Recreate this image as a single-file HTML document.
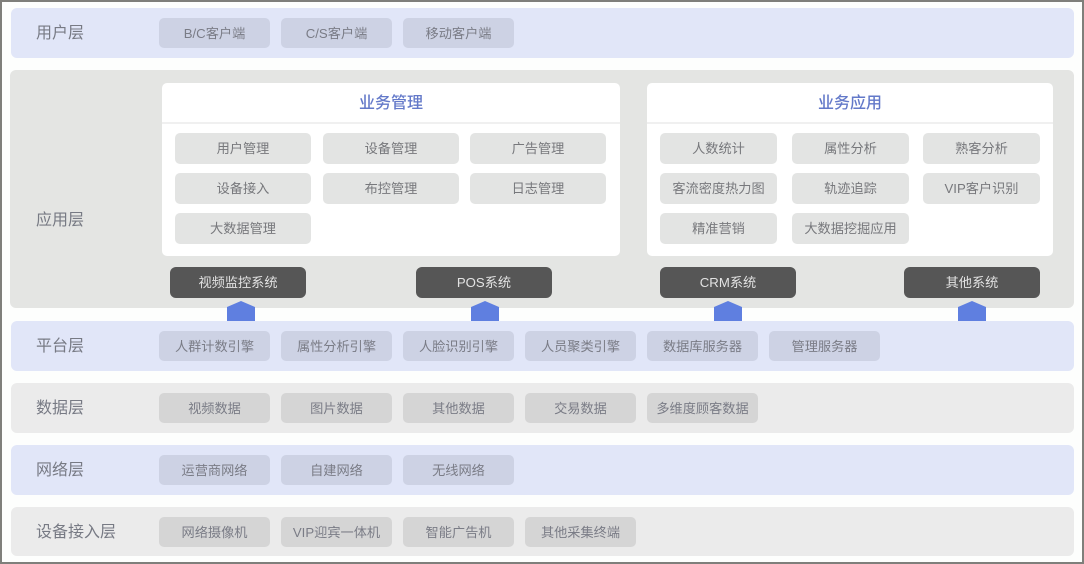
<!DOCTYPE html>
<html lang="zh-CN"><head><meta charset="utf-8"><title>系统架构</title>
<style>
html,body{margin:0;padding:0;background:#fff}
body{width:1084px;height:564px;position:relative;overflow:hidden;font-family:"Liberation Sans","Noto Sans CJK SC",sans-serif}
#f{position:absolute;left:0;top:0;width:1080px;height:560px;border:solid #7f7f7b;border-width:2px;background:#fdfefd}
div.a{position:absolute;box-sizing:border-box}
.b{border-radius:6px}
.blue{background:#e1e6f8}
.gray{background:#ebebeb}
.app{background:#e4e5e3}
.l{font-size:16px;color:#777a84;line-height:20px;text-align:left;white-space:nowrap;padding-top:1px;filter:blur(.3px)}
.c{border-radius:5px;text-align:center;font-size:13.2px;line-height:31px;height:30px;width:111px;color:#7a7c86;white-space:nowrap;filter:blur(.3px)}
.cb{background:#cdd2e4}
.cg{background:#d5d5d5}
.p{background:#fff;border-radius:5px}
.h{font-size:16px;color:#6379c9;text-align:center;line-height:20px;font-weight:500;padding-top:1px;filter:blur(.3px)}
.i{background:#e3e4e3;border-radius:5px;height:31px;line-height:31px;font-size:13.2px;text-align:center;color:#77787c;white-space:nowrap;filter:blur(.3px)}
.d{background:#565656;color:#e2e2e2;border-radius:6px;width:136px;height:31px;top:267px;line-height:32px;font-size:13.2px;text-align:center;filter:blur(.3px)}
.ar{width:28px;height:20px;top:301px;background:#5f7fe0;clip-path:polygon(50% 0,100% 30%,100% 100%,0 100%,0 30%)}
</style></head><body>
<div id="f"></div>

<div class="a b blue" style="left:11px;top:8px;width:1063px;height:50px"></div>
<div class="a l" style="left:36px;top:23px">用户层</div>
<div class="a c cb" style="left:159px;top:18px">B/C客户端</div>
<div class="a c cb" style="left:281px;top:18px">C/S客户端</div>
<div class="a c cb" style="left:403px;top:18px">移动客户端</div>

<div class="a b app" style="left:10px;top:70px;width:1064px;height:238px"></div>
<div class="a l" style="left:36px;top:210px">应用层</div>

<div class="a p" style="left:162px;top:83px;width:458px;height:173px"></div>
<div class="a" style="left:162px;top:122px;width:458px;height:2px;background:#f0f0f0"></div>
<div class="a h" style="left:162px;top:93px;width:458px">业务管理</div>
<div class="a i" style="left:175px;top:133px;width:136px">用户管理</div>
<div class="a i" style="left:323px;top:133px;width:136px">设备管理</div>
<div class="a i" style="left:470px;top:133px;width:136px">广告管理</div>
<div class="a i" style="left:175px;top:173px;width:136px">设备接入</div>
<div class="a i" style="left:323px;top:173px;width:136px">布控管理</div>
<div class="a i" style="left:470px;top:173px;width:136px">日志管理</div>
<div class="a i" style="left:175px;top:213px;width:136px">大数据管理</div>

<div class="a p" style="left:647px;top:83px;width:406px;height:173px"></div>
<div class="a" style="left:647px;top:122px;width:406px;height:2px;background:#f0f0f0"></div>
<div class="a h" style="left:647px;top:93px;width:406px">业务应用</div>
<div class="a i" style="left:660px;top:133px;width:117px">人数统计</div>
<div class="a i" style="left:792px;top:133px;width:117px">属性分析</div>
<div class="a i" style="left:923px;top:133px;width:117px">熟客分析</div>
<div class="a i" style="left:660px;top:173px;width:117px">客流密度热力图</div>
<div class="a i" style="left:792px;top:173px;width:117px">轨迹追踪</div>
<div class="a i" style="left:923px;top:173px;width:117px">VIP客户识别</div>
<div class="a i" style="left:660px;top:213px;width:117px">精准营销</div>
<div class="a i" style="left:792px;top:213px;width:117px">大数据挖掘应用</div>

<div class="a d" style="left:170px">视频监控系统</div>
<div class="a d" style="left:416px">POS系统</div>
<div class="a d" style="left:660px">CRM系统</div>
<div class="a d" style="left:904px">其他系统</div>
<div class="a ar" style="left:227px"></div>
<div class="a ar" style="left:471px"></div>
<div class="a ar" style="left:714px"></div>
<div class="a ar" style="left:958px"></div>

<div class="a b blue" style="left:11px;top:321px;width:1063px;height:50px"></div>
<div class="a l" style="left:36px;top:336px">平台层</div>
<div class="a c cb" style="left:159px;top:331px">人群计数引擎</div>
<div class="a c cb" style="left:281px;top:331px">属性分析引擎</div>
<div class="a c cb" style="left:403px;top:331px">人脸识别引擎</div>
<div class="a c cb" style="left:525px;top:331px">人员聚类引擎</div>
<div class="a c cb" style="left:647px;top:331px">数据库服务器</div>
<div class="a c cb" style="left:769px;top:331px">管理服务器</div>

<div class="a b gray" style="left:11px;top:383px;width:1063px;height:50px"></div>
<div class="a l" style="left:36px;top:398px">数据层</div>
<div class="a c cg" style="left:159px;top:393px">视频数据</div>
<div class="a c cg" style="left:281px;top:393px">图片数据</div>
<div class="a c cg" style="left:403px;top:393px">其他数据</div>
<div class="a c cg" style="left:525px;top:393px">交易数据</div>
<div class="a c cg" style="left:647px;top:393px">多维度顾客数据</div>

<div class="a b blue" style="left:11px;top:445px;width:1063px;height:50px"></div>
<div class="a l" style="left:36px;top:460px">网络层</div>
<div class="a c cb" style="left:159px;top:455px">运营商网络</div>
<div class="a c cb" style="left:281px;top:455px">自建网络</div>
<div class="a c cb" style="left:403px;top:455px">无线网络</div>

<div class="a b gray" style="left:11px;top:507px;width:1063px;height:49px"></div>
<div class="a l" style="left:36px;top:522px">设备接入层</div>
<div class="a c cg" style="left:159px;top:517px">网络摄像机</div>
<div class="a c cg" style="left:281px;top:517px">VIP迎宾一体机</div>
<div class="a c cg" style="left:403px;top:517px">智能广告机</div>
<div class="a c cg" style="left:525px;top:517px">其他采集终端</div>
</body></html>
